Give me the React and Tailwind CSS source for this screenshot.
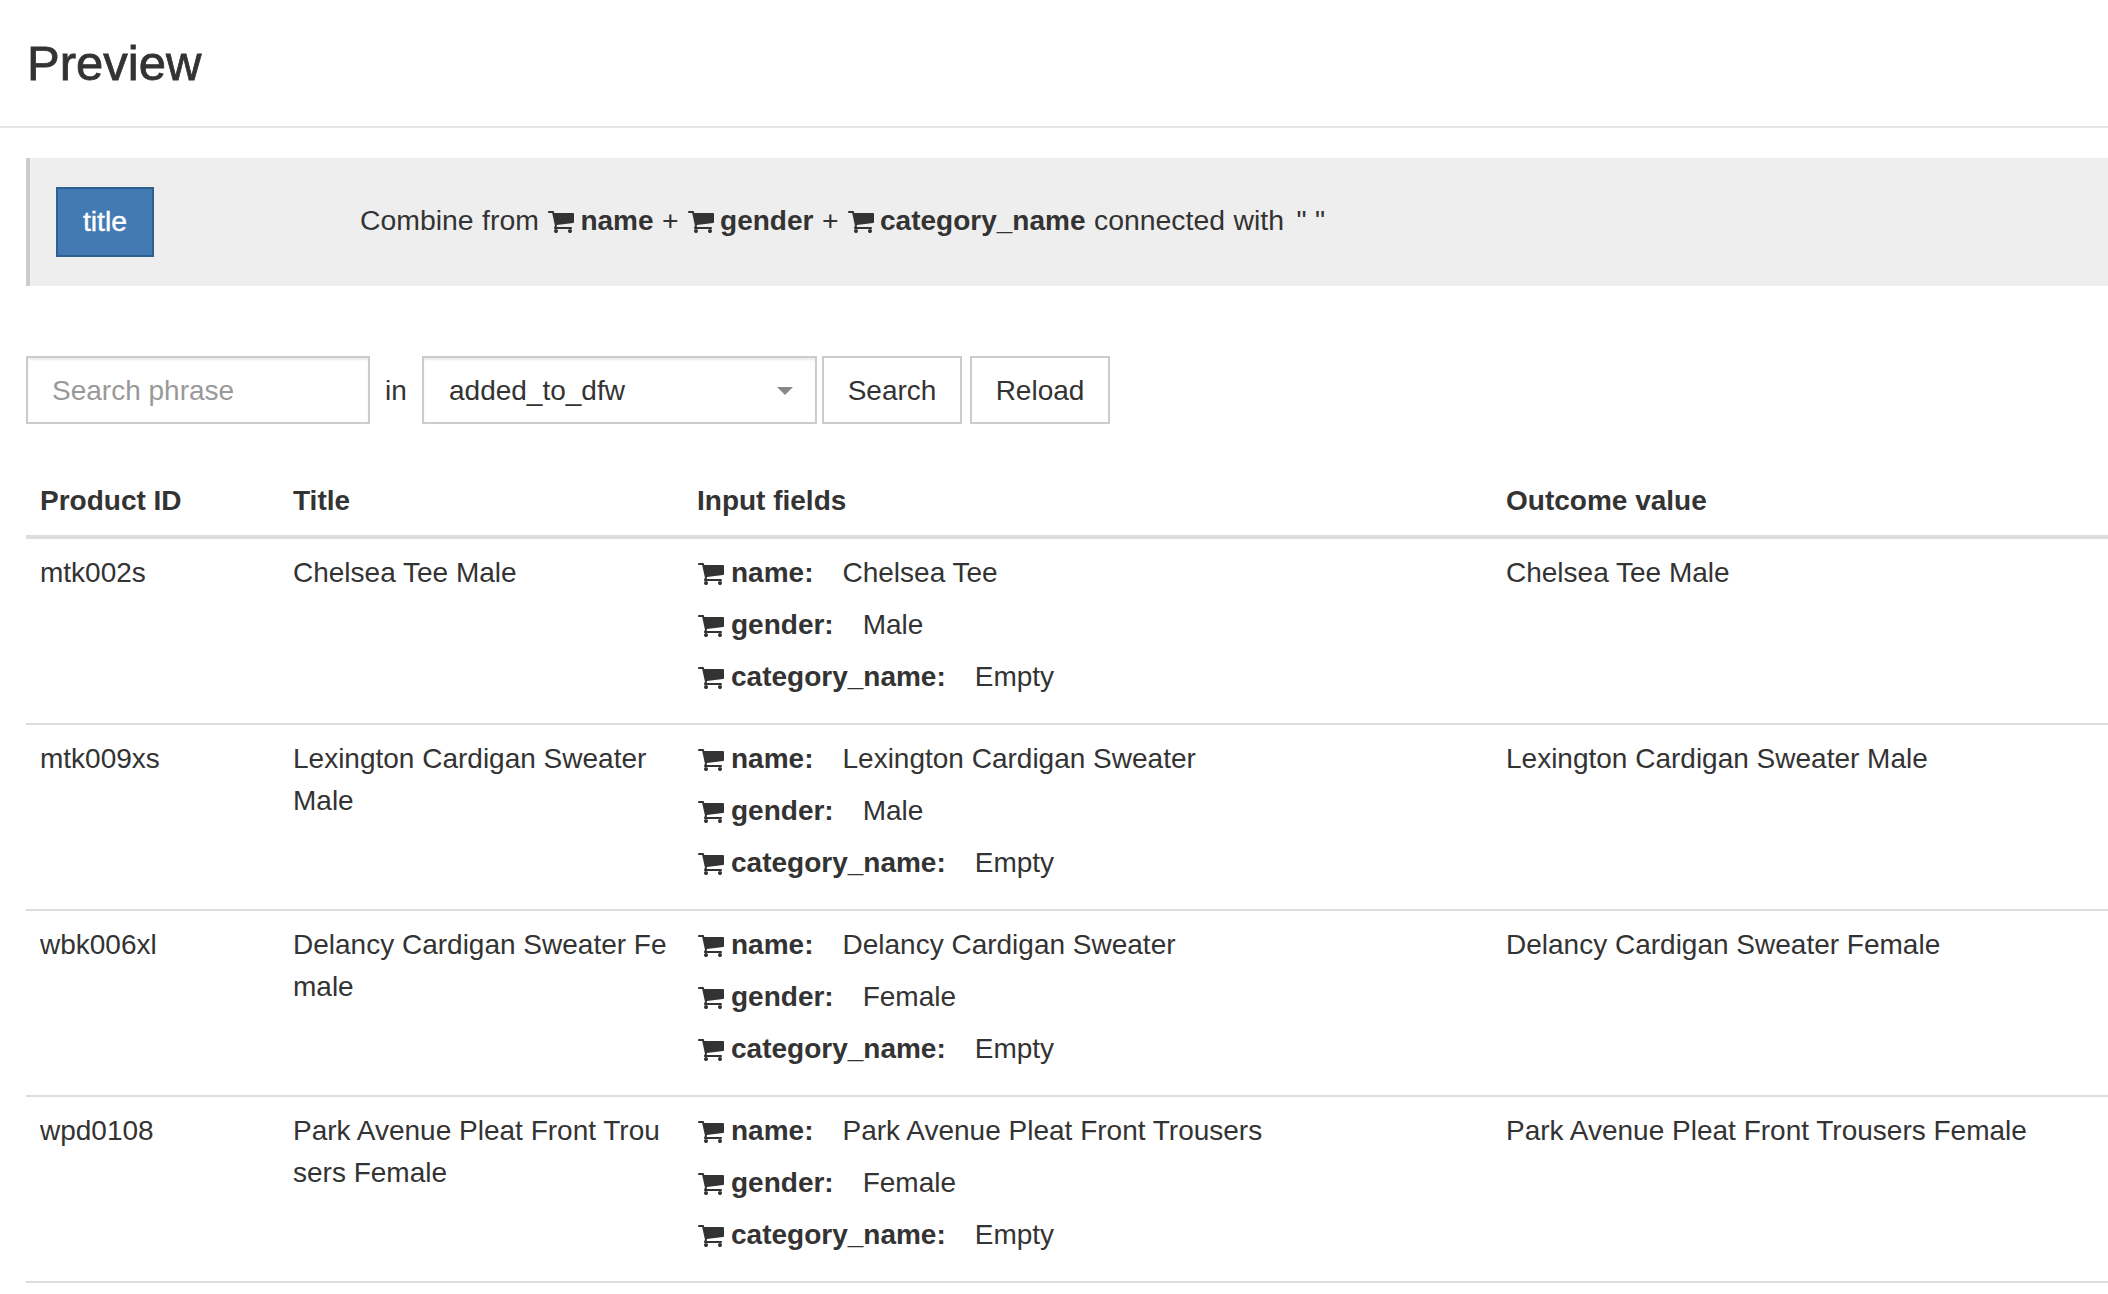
const rows = [
  { id: "mtk002s", title: "Chelsea Tee Male", name: "Chelsea Tee", gender: "Male", outcome: "Chelsea Tee Male" },
  { id: "mtk009xs", title: "Lexington Cardigan Sweater Male", name: "Lexington Cardigan Sweater", gender: "Male", outcome: "Lexington Cardigan Sweater Male" },
  { id: "wbk006xl", title: "Delancy Cardigan Sweater Female", name: "Delancy Cardigan Sweater", gender: "Female", outcome: "Delancy Cardigan Sweater Female" },
  { id: "wpd0108", title: "Park Avenue Pleat Front Trousers Female", name: "Park Avenue Pleat Front Trousers", gender: "Female", outcome: "Park Avenue Pleat Front Trousers Female" },
];

const Cart = ({ className }) => (
  <svg viewBox="0 0 1792 1792" fill="currentColor" className={className} aria-hidden="true">
    <path d="M704 1536q0 52-38 90t-90 38-90-38-38-90 38-90 90-38 90 38 38 90zm896 0q0 52-38 90t-90 38-90-38-38-90 38-90 90-38 90 38 38 90zm128-1088v512q0 24-16.5 42.5t-40.5 21.5l-1044 122q13 60 13 70 0 16-24 64h920q26 0 45 19t19 45-19 45-45 19h-1024q-26 0-45-19t-19-45q0-11 8-31.5t16-36 21.5-40 15.5-29.5l-177-823h-204q-26 0-45-19t-19-45 19-45 45-19h256q16 0 28.5 6.5t19.5 15.5 13 24.5 8 26 5.5 29.5 4.5 26h1201q26 0 45 19t19 45z" />
  </svg>
);

const FieldRef = ({ label }) => (
  <>
    <Cart className="inline-block w-[28px] h-[28px] align-[-5px] mr-[5px]" />
    <b className="font-bold text-[28px]">{label}</b>
  </>
);

const Field = ({ label, value }) => (
  <div className="flex items-center h-[42px] mb-[10px] whitespace-nowrap">
    <Cart className="w-[28px] h-[28px] mr-[6px] shrink-0" />
    <b className="font-bold mr-[29px]">{label}:</b>
    <span>{value}</span>
  </div>
);

export default function App() {
  return (
    <div className="min-h-[1294px] bg-white text-[#333] text-[28px] leading-[42px] font-['Liberation_Sans',Arial,sans-serif] overflow-hidden">
      {/* Header */}
      <div className="h-[128px] flex items-center pl-[27px] border-b-2 border-[#e5e5e5]">
        <h1 className="text-[49px] font-medium leading-none [-webkit-text-stroke:0.8px_#333]">Preview</h1>
      </div>

      <div className="pl-[26px]">
        {/* Rule bar */}
        <div className="mt-[30px] h-[128px] flex items-center bg-[#eee] border-l-4 border-[#ccc] pl-[26px] text-[28.4px]">
          <span className="w-[98px] h-[70px] flex items-center justify-center pb-[2px] bg-[#437ab3] border-2 border-[#2e5f8f] text-white [-webkit-text-stroke:0.4px_#fff]">title</span>
          <p className="ml-[206px] mb-[3px] [word-spacing:0.6px]">
            Combine from <FieldRef label="name" /> + <FieldRef label="gender" /> + <FieldRef label="category_name" /> connected with <span className="ml-[4px]">" "</span>
          </p>
        </div>

        {/* Search */}
        <div className="mt-[70px] flex items-center h-[68px]">
          <input
            placeholder="Search phrase"
            className="w-[344px] h-full pl-[24px] pr-[24px] pt-[2px] border-2 border-[#ccc] shadow-[inset_0_2px_2px_rgba(0,0,0,0.075)] outline-none placeholder:text-[#999]"
          />
          <span className="w-[52px] text-center pt-[2px]">in</span>
          <div className="w-[395px] h-full flex items-center justify-between pl-[25px] pr-[22px] pt-[2px] border-2 border-[#ccc] shadow-[inset_0_2px_2px_rgba(0,0,0,0.075)]">
            <span>added_to_dfw</span>
            <span className="w-0 h-0 border-x-[8px] border-x-transparent border-t-[8px] border-t-[#888]"></span>
          </div>
          <button className="ml-[5px] w-[140px] h-full pt-[2px] border-2 border-[#ccc] bg-white">Search</button>
          <button className="ml-[8px] w-[140px] h-full pt-[2px] border-2 border-[#ccc] bg-white">Reload</button>
        </div>

        {/* Results */}
        <table className="mt-[45px] w-[2082px] table-fixed border-collapse text-left">
          <colgroup>
            <col className="w-[253px]" />
            <col className="w-[404px]" />
            <col className="w-[809px]" />
            <col />
          </colgroup>
          <thead>
            <tr className="border-b-4 border-[#ddd]">
              <th className="px-[14px] pt-[11px] pb-[13px] font-bold align-bottom">Product ID</th>
              <th className="px-[14px] pt-[11px] pb-[13px] font-bold align-bottom">Title</th>
              <th className="px-[14px] pt-[11px] pb-[13px] font-bold align-bottom">Input fields</th>
              <th className="px-[14px] pt-[11px] pb-[13px] font-bold align-bottom">Outcome value</th>
            </tr>
          </thead>
          <tbody>
            {rows.map((r) => (
              <tr key={r.id} className="border-b-2 border-[#ddd] align-top">
                <td className="px-[14px] pt-[13px] pb-[15px]">{r.id}</td>
                <td className="px-[14px] pt-[13px] pb-[15px] break-all">{r.title}</td>
                <td className="px-[14px] pt-[13px] pb-[15px]">
                  <Field label="name" value={r.name} />
                  <Field label="gender" value={r.gender} />
                  <Field label="category_name" value="Empty" />
                </td>
                <td className="px-[14px] pt-[13px] pb-[15px]">{r.outcome}</td>
              </tr>
            ))}
          </tbody>
        </table>
      </div>
    </div>
  );
}
